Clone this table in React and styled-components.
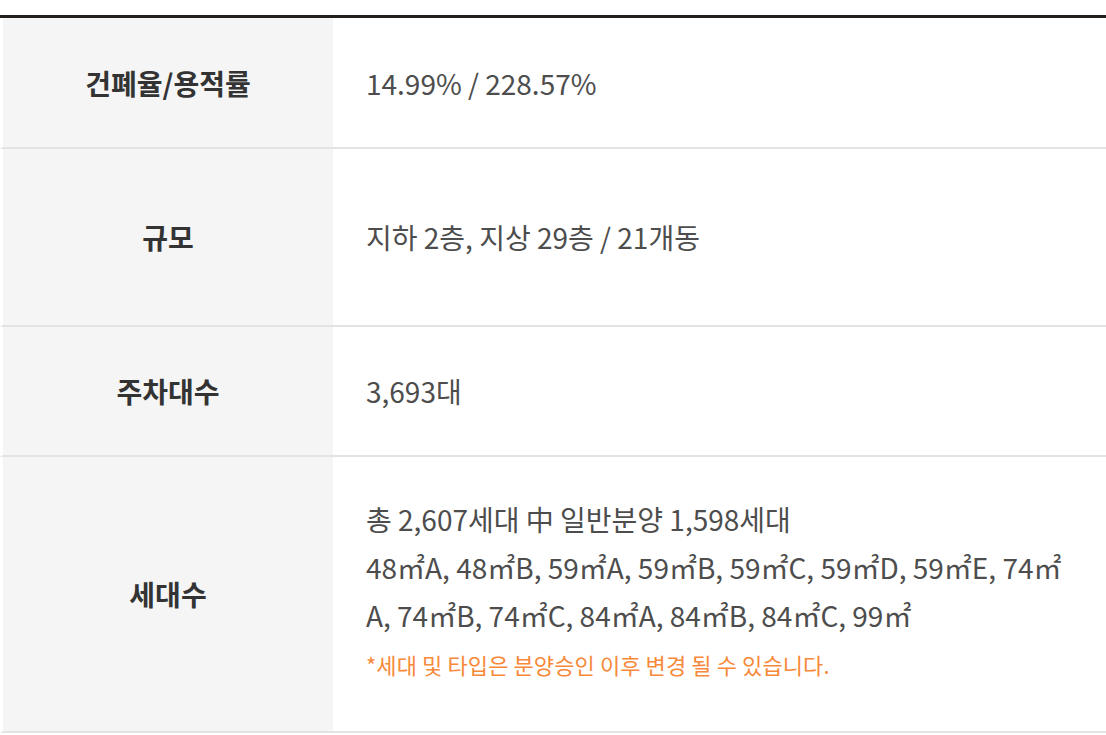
import React from "react";
import styled, { createGlobalStyle } from "styled-components";

const GlobalStyle = createGlobalStyle`
  html, body {
    margin: 0;
    padding: 0;
    background: #fff;
  }
  body {
    font-family: "Noto Sans CJK KR", "Noto Sans", sans-serif;
  }
`;

const Page = styled.div`
  width: 1106px;
  height: 735px;
  padding-top: 15px;
  box-sizing: border-box;
  overflow: hidden;
`;

const Table = styled.div`
  display: grid;
  grid-template-columns: 333px 1fr;
  border-top: 3px solid #231f1c;
`;

const Label = styled.div`
  height: ${({ h }) => h}px;
  display: flex;
  align-items: center;
  justify-content: center;
  background: #f5f5f5;
  border-left: 3px solid #fff;
  border-bottom: 2px solid #e3e3e3;
  font-size: 28px;
  font-weight: 700;
  letter-spacing: 0;
  color: #333;
`;

const Value = styled.div`
  height: ${({ h }) => h}px;
  display: flex;
  flex-direction: column;
  justify-content: center;
  padding-left: 33px;
  border-bottom: 2px solid #e3e3e3;
  font-size: 28px;
  letter-spacing: 0;
  color: #4d4d4d;
`;

const Line = styled.div`
  line-height: 48px;
  white-space: nowrap;
`;

const Note = styled.div`
  margin-top: 9px;
  margin-bottom: 13px;
  line-height: 32px;
  font-size: 22px;
  letter-spacing: 0.1px;
  color: #f7893a;
`;

const rows = [
  { label: "건폐율/용적률", h: 129, lines: ["14.99% / 228.57%"] },
  { label: "규모", h: 176, lines: ["지하 2층, 지상 29층 / 21개동"] },
  { label: "주차대수", h: 128, lines: ["3,693대"] },
  {
    label: "세대수",
    h: 274,
    lines: [
      "총 2,607세대 中 일반분양 1,598세대",
      "48㎡A, 48㎡B, 59㎡A, 59㎡B, 59㎡C, 59㎡D, 59㎡E, 74㎡",
      "A, 74㎡B, 74㎡C, 84㎡A, 84㎡B, 84㎡C, 99㎡",
    ],
    note: "*세대 및 타입은 분양승인 이후 변경 될 수 있습니다.",
  },
];

export default function App() {
  return (
    <Page>
      <GlobalStyle />
      <Table>
        {rows.map((r) => (
          <React.Fragment key={r.label}>
            <Label h={r.h}>{r.label}</Label>
            <Value h={r.h}>
              {r.lines.map((l) => (
                <Line key={l}>{l}</Line>
              ))}
              {r.note && <Note>{r.note}</Note>}
            </Value>
          </React.Fragment>
        ))}
      </Table>
    </Page>
  );
}
